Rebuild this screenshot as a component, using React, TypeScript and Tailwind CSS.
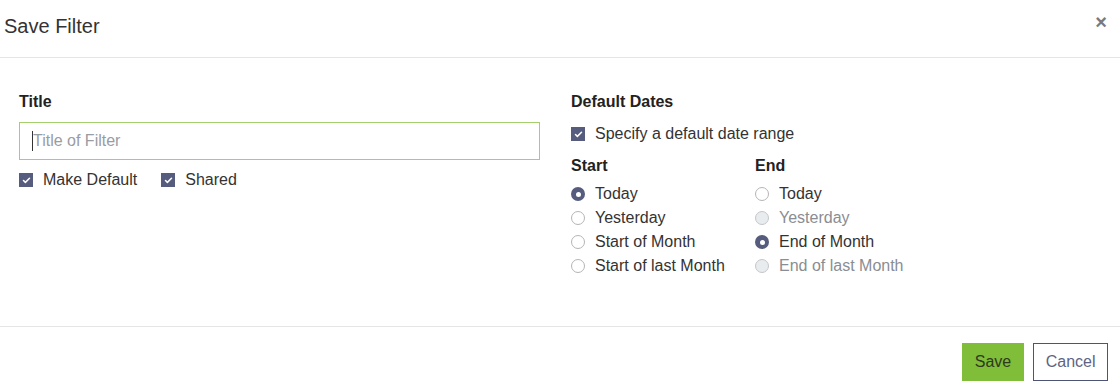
import { Check } from 'lucide-react';

const font = { fontFamily: '"Liberation Sans", Arial, sans-serif' };

function Checkbox({ label }: { label: string }) {
  return (
    <label className="flex items-center gap-[10px] text-[16px] leading-[24px] text-[#333]">
      <span className="w-[14px] h-[14px] bg-[#565c7e] flex items-center justify-center">
        <Check className="w-[9px] h-[9px] text-white" strokeWidth={4} />
      </span>
      {label}
    </label>
  );
}

function Radio({ label, checked, disabled }: { label: string; checked?: boolean; disabled?: boolean }) {
  return (
    <label className={`flex items-center gap-[10px] text-[16px] leading-[24px] ${disabled ? 'text-[#8a8d93]' : 'text-[#333]'}`}>
      {checked ? (
        <span className="w-[14px] h-[14px] rounded-full bg-[#565c7e] flex items-center justify-center">
          <span className="w-[5px] h-[5px] rounded-full bg-white" />
        </span>
      ) : (
        <span className={`w-[14px] h-[14px] rounded-full border ${disabled ? 'border-[#c4c6ca] bg-[#e9ecef]' : 'border-[#b5b5b5] bg-white'}`} />
      )}
      {label}
    </label>
  );
}

export default function App() {
  return (
    <div className="w-[1120px] h-[389px] bg-white flex flex-col" style={font}>
      {/* Header */}
      <div className="h-[58px] flex items-center justify-between pl-[4px] pr-[13px] border-b border-[#e5e5e5]">
        <h2 className="text-[20px] text-[#333] leading-none -mt-[6px]">Save Filter</h2>
        <button className="text-[#7a7a7a] text-[20px] font-bold leading-none -mt-[13px]">×</button>
      </div>

      {/* Body */}
      <div className="flex-1 flex pt-[32px] pl-[19px] border-b border-[#e5e5e5]">
        <div className="w-[521px]">
          <div className="text-[16px] font-bold text-[#222] leading-[24px]">Title</div>
          <div className="mt-[8px] h-[38px] border border-[#a5cf6c] flex items-center pl-[12px]">
            <span className="w-px h-[20px] bg-[#333]" />
            <span className="text-[16px] text-[#999ca3]">Title of Filter</span>
          </div>
          <div className="mt-[8px] flex gap-[24px]">
            <Checkbox label="Make Default" />
            <Checkbox label="Shared" />
          </div>
        </div>

        <div className="ml-[31px]">
          <div className="text-[16px] font-bold text-[#222] leading-[24px]">Default Dates</div>
          <div className="mt-[8px]">
            <Checkbox label="Specify a default date range" />
          </div>
          <div className="mt-[8px] flex">
            <div className="w-[184px]">
              <div className="text-[16px] font-bold text-[#222] leading-[24px]">Start</div>
              <div className="mt-[4px]">
                <Radio label="Today" checked />
                <Radio label="Yesterday" />
                <Radio label="Start of Month" />
                <Radio label="Start of last Month" />
              </div>
            </div>
            <div>
              <div className="text-[16px] font-bold text-[#222] leading-[24px]">End</div>
              <div className="mt-[4px]">
                <Radio label="Today" />
                <Radio label="Yesterday" disabled />
                <Radio label="End of Month" checked />
                <Radio label="End of last Month" disabled />
              </div>
            </div>
          </div>
        </div>
      </div>

      {/* Footer */}
      <div className="h-[62px] flex items-start justify-end gap-[9px] pt-[16px] pr-[12px]">
        <button className="h-[38px] px-[13px] bg-[#80bd39] text-[#2d3a1e] text-[16px]">Save</button>
        <button className="h-[38px] px-[11.5px] border border-[#4d5477] text-[#5e6483] text-[16px]">Cancel</button>
      </div>
    </div>
  );
}
